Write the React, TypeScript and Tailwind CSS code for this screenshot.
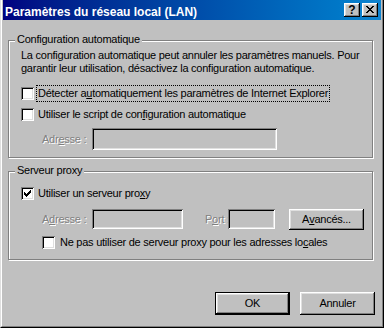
import React from "react";

const raised =
  "shadow-[inset_-1px_-1px_#000,inset_1px_1px_#fff,inset_-2px_-2px_#808080,inset_2px_2px_#dfdfdf]";
const sunken =
  "shadow-[inset_1px_1px_#808080,inset_-1px_-1px_#fff,inset_2px_2px_#000,inset_-2px_-2px_#dfdfdf]";
const etched = "border border-[#808080] shadow-[inset_1px_1px_#fff,1px_1px_#fff]";
const disabled = "text-[#808080] [text-shadow:1px_1px_0_#fff]";

function CheckBox({ checked }: { checked?: boolean }) {
  return (
    <div className={`w-[13px] h-[13px] shrink-0 bg-white ${sunken} flex items-center justify-center`}>
      {checked && (
        <svg width="7" height="7" viewBox="0 0 7 7" shapeRendering="crispEdges">
          <path
            d="M6 0h1v1H6z M5 1h2v1H5z M0 2h1v1H0z M4 2h3v1H4z M0 3h2v1H0z M3 3h3v1H3z M0 4h5v1H0z M1 5h3v1H1z M2 6h1v1H2z"
            fill="#000"
          />
        </svg>
      )}
    </div>
  );
}

export default function App() {
  return (
    <div className="w-[384px] h-[328px] overflow-hidden bg-[#c0c0c0] border-l border-r border-b border-l-[#dfdfdf] border-r-black border-b-black font-['Liberation_Sans',Arial,sans-serif] text-[11px] leading-[13px] tracking-[-0.25px] text-black">
      <div className="h-full flex flex-col border-l border-r border-b border-l-white border-r-[#808080] border-b-[#808080] px-px">
        {/* Title bar */}
        <div className="h-[20px] shrink-0 flex items-start justify-between bg-linear-to-r from-[#000080] to-[#1084d0] pl-[2px] pr-[3px]">
          <span className="pt-[5px] text-[12px] leading-[14px] font-bold text-white tracking-normal whitespace-nowrap">
            Paramètres du réseau local (LAN)
          </span>
          <div className="flex gap-[2px] pt-[3px]">
            <div
              className={`w-[16px] h-[14px] bg-[#c0c0c0] ${raised} flex items-center justify-center text-[12px] font-bold leading-none tracking-normal`}
            >
              ?
            </div>
            <div className={`w-[16px] h-[14px] bg-[#c0c0c0] ${raised} flex items-start justify-center pt-[3px]`}>
              <svg width="8" height="7" viewBox="0 0 8 7" shapeRendering="crispEdges">
                <path
                  d="M0 0h2v1H0z M6 0h2v1H6z M1 1h2v1H1z M5 1h2v1H5z M2 2h4v1H2z M3 3h2v1H3z M2 4h4v1H2z M1 5h2v1H1z M5 5h2v1H5z M0 6h2v1H0z M6 6h2v1H6z"
                  fill="#000"
                />
              </svg>
            </div>
          </div>
        </div>

        {/* Group 1 */}
        <div className={`relative mt-[20px] ml-[5px] w-[365px] h-[118px] shrink-0 ${etched}`}>
          <span className="absolute left-[6px] top-[-8px] bg-[#c0c0c0] px-[2px] whitespace-nowrap">
            Configuration automatique
          </span>
          <div className="pl-[12px] pt-[8px]">
            <p className="whitespace-nowrap">
              La configuration automatique peut annuler les paramètres manuels. Pour
              <br />
              garantir leur utilisation, désactivez la configuration automatique.
            </p>
            <div className="mt-[10px] flex items-center">
              <CheckBox />
              <span className="ml-[2px] border border-dotted border-black px-px py-px whitespace-nowrap">
                Détecter a<u>u</u>tomatiquement les paramètres de Internet Explorer
              </span>
            </div>
            <div className="mt-[4px] flex items-center">
              <CheckBox />
              <span className="ml-[2px] border border-transparent px-px py-px whitespace-nowrap">
                Utiliser le script de con<u>f</u>iguration automatique
              </span>
            </div>
            <div className="mt-[5px] flex items-center">
              <span className={`ml-[21px] w-[50px] whitespace-nowrap ${disabled}`}>
                Adr<u>e</u>sse :
              </span>
              <div className={`w-[185px] h-[22px] bg-[#c0c0c0] ${sunken}`} />
            </div>
          </div>
        </div>

        {/* Group 2 */}
        <div className={`relative mt-[13px] ml-[5px] w-[365px] h-[89px] shrink-0 ${etched}`}>
          <span className="absolute left-[6px] top-[-8px] bg-[#c0c0c0] px-[2px] whitespace-nowrap">
            Serveur proxy
          </span>
          <div className="pl-[12px] pt-[13px]">
            <div className="flex items-center">
              <CheckBox checked />
              <span className="ml-[2px] border border-transparent px-px py-px whitespace-nowrap">
                Utiliser un serveur pro<u>x</u>y
              </span>
            </div>
            <div className="mt-[7px] flex items-start">
              <span className={`ml-[21px] w-[50px] h-[20px] flex items-center whitespace-nowrap ${disabled}`}>
                A<u>d</u>resse :
              </span>
              <div className={`w-[91px] h-[20px] bg-[#c0c0c0] ${sunken}`} />
              <span className={`ml-[22px] w-[23px] h-[20px] flex items-center whitespace-nowrap ${disabled}`}>
                P<u>o</u>rt :
              </span>
              <div className={`w-[47px] h-[20px] bg-[#c0c0c0] ${sunken}`} />
              <div
                className={`ml-[14px] w-[75px] h-[21px] bg-[#c0c0c0] ${raised} flex items-center justify-center whitespace-nowrap`}
              >
                A<u>v</u>ancés...
              </div>
            </div>
            <div className="mt-[4px] flex items-center">
              <div className="ml-[21px]">
                <CheckBox />
              </div>
              <span className="ml-[3px] border border-transparent px-px py-px whitespace-nowrap">
                Ne pas utiliser de serveur proxy pour les adresses lo<u>c</u>ales
              </span>
            </div>
          </div>
        </div>

        {/* Buttons */}
        <div className="mt-[32px] flex justify-end gap-[10px] pr-[6px]">
          <div
            className={`w-[75px] h-[23px] border border-black bg-[#c0c0c0] ${raised} flex items-center justify-center`}
          >
            OK
          </div>
          <div className={`w-[75px] h-[23px] bg-[#c0c0c0] ${raised} flex items-center justify-center`}>
            Annuler
          </div>
        </div>
      </div>
    </div>
  );
}
